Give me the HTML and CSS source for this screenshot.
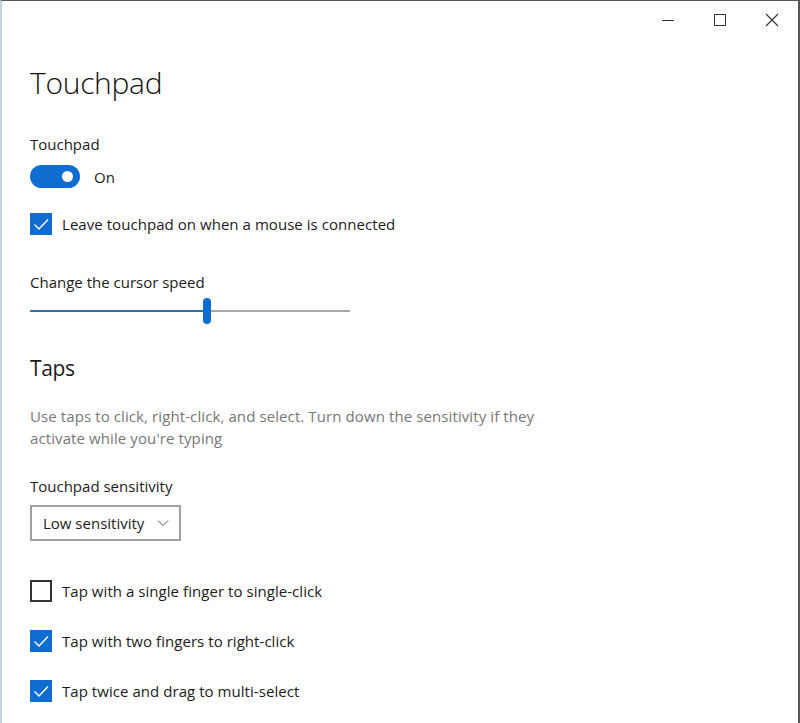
FILE: index.html
```html
<!DOCTYPE html>
<html>
<head>
<meta charset="utf-8">
<link rel="stylesheet" href="styles.css">
</head>
<body>
<div class="window">
  <div class="titlebar">
    <div class="ctl"><svg width="14" height="14" viewBox="0 0 14 14"><line x1="1" y1="7.5" x2="13" y2="7.5" stroke="#333" stroke-width="1"/></svg></div>
    <div class="ctl"><svg width="14" height="14" viewBox="0 0 14 14"><rect x="1.5" y="1.5" width="11" height="11" fill="none" stroke="#333" stroke-width="1"/></svg></div>
    <div class="ctl"><svg width="14" height="14" viewBox="0 0 14 14"><path d="M1 1 L13 13 M13 1 L1 13" stroke="#333" stroke-width="1.1" fill="none"/></svg></div>
  </div>
  <div class="content">
    <h1 class="title">Touchpad</h1>

    <div class="label first">Touchpad</div>
    <div class="toggle-row">
      <div class="toggle"><span class="knob"></span></div>
      <span class="toggle-text">On</span>
    </div>

    <div class="check-row row-leave">
      <span class="box checked"><svg width="22" height="22" viewBox="0 0 22 22"><path d="M4.5 11.5 L9 16 L18 6.5" fill="none" stroke="#fff" stroke-width="1.4"/></svg></span>
      <span class="check-text">Leave touchpad on when a mouse is connected</span>
    </div>

    <div class="label speed">Change the cursor speed</div>
    <div class="slider">
      <div class="track-fill"></div>
      <div class="thumb"></div>
      <div class="track-rest"></div>
    </div>

    <h2 class="section">Taps</h2>
    <p class="desc">Use taps to click, right-click, and select. Turn down the sensitivity if they activate while you're typing</p>

    <div class="label sens">Touchpad sensitivity</div>
    <div class="dropdown">
      <span>Low sensitivity</span>
      <svg width="12" height="8" viewBox="0 0 12 8"><path d="M1 1.5 L6 6.5 L11 1.5" fill="none" stroke="#555" stroke-width="1"/></svg>
    </div>

    <div class="check-row row-tap1">
      <span class="box"></span>
      <span class="check-text">Tap with a single finger to single-click</span>
    </div>
    <div class="check-row row-tap">
      <span class="box checked"><svg width="22" height="22" viewBox="0 0 22 22"><path d="M4.5 11.5 L9 16 L18 6.5" fill="none" stroke="#fff" stroke-width="1.4"/></svg></span>
      <span class="check-text">Tap with two fingers to right-click</span>
    </div>
    <div class="check-row row-tap">
      <span class="box checked"><svg width="22" height="22" viewBox="0 0 22 22"><path d="M4.5 11.5 L9 16 L18 6.5" fill="none" stroke="#fff" stroke-width="1.4"/></svg></span>
      <span class="check-text">Tap twice and drag to multi-select</span>
    </div>
  </div>
</div>
</body>
</html>
```

FILE: styles.css
```css
html, body {
  margin: 0;
  padding: 0;
  background: #fff;
}
body {
  font-family: "Open Sans", "Noto Sans", sans-serif;
  color: #1b1b1b;
}
.window {
  width: 800px;
  height: 723px;
  box-sizing: border-box;
  border-top: 1px solid #555;
  border-left: 2px solid #c4d0e0;
  border-right: 2px solid #555;
  background: #fff;
  overflow: hidden;
}
.titlebar {
  display: flex;
  justify-content: flex-end;
  height: 37px;
}
.ctl {
  width: 52px;
  display: flex;
  align-items: center;
  justify-content: center;
}
.content {
  padding-left: 28px;
}
.title {
  margin: 25px 0 0;
  font-size: 30px;
  font-weight: 300;
  line-height: 40px;
  color: #111;
  letter-spacing: -0.3px;
}
.label {
  font-size: 15px;
  line-height: 20px;
}
.label.first {
  margin-top: 31px;
}
.toggle-row {
  display: flex;
  align-items: center;
  margin-top: 11px;
  height: 23px;
}
.toggle {
  width: 50px;
  height: 23px;
  border-radius: 12px;
  background: #0f6cd1;
  position: relative;
}
.knob {
  position: absolute;
  right: 7px;
  top: 6px;
  width: 11px;
  height: 11px;
  border-radius: 50%;
  background: #fff;
}
.toggle-text {
  margin-left: 14px;
  font-size: 15px;
}
.check-row {
  display: flex;
  align-items: center;
  height: 22px;
}
.row-leave {
  margin-top: 25px;
}
.box {
  width: 22px;
  height: 22px;
  box-sizing: border-box;
  border: 2px solid #333;
  flex: none;
  display: flex;
}
.box.checked {
  border: none;
  background: #0f6cd1;
}
.check-text {
  margin-left: 10px;
  font-size: 15px;
  line-height: 20px;
  margin-top: -1px;
  letter-spacing: 0.05px;
}
.label.speed {
  margin-top: 37px;
}
.slider {
  margin-top: 6px;
  width: 320px;
  height: 26px;
  display: flex;
  align-items: center;
}
.track-fill {
  width: 173px;
  height: 2px;
  background: #2f6fae;
}
.thumb {
  width: 8px;
  height: 26px;
  border-radius: 4px;
  background: #0f6cd1;
}
.track-rest {
  flex: 1;
  height: 2px;
  background: #a8a8a8;
}
.section {
  margin: 29px 0 0;
  font-size: 21px;
  font-weight: 400;
  line-height: 30px;
  letter-spacing: -0.4px;
}
.desc {
  margin: 22px 0 0;
  width: 530px;
  font-size: 15px;
  line-height: 22px;
  color: #777;
  letter-spacing: 0.1px;
}
.label.sens {
  margin-top: 27px;
}
.dropdown {
  margin-top: 9px;
  width: 151px;
  height: 36px;
  box-sizing: border-box;
  border: 2px solid #a0a0a0;
  display: flex;
  align-items: center;
  justify-content: space-between;
  padding: 0 10px 0 11px;
  font-size: 15px;
}
.row-tap1 {
  margin-top: 39px;
}
.row-tap {
  margin-top: 28px;
}
```
